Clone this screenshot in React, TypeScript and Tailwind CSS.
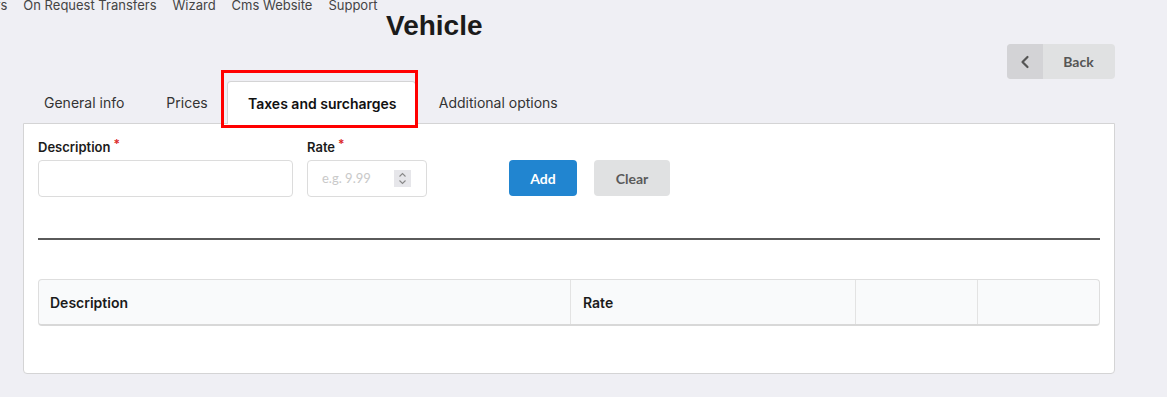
import React from "react";

const inter = { fontFamily: "Inter, 'Noto Sans', sans-serif" };

export default function App() {
  return (
    <div className="min-h-[397px] w-[1167px] bg-[#efeff4] text-[#222] [font-family:Inter,'Noto_Sans',sans-serif]">
      {/* top nav (cut off) */}
      <div className="flex h-[10px] items-center gap-[16px] overflow-visible whitespace-nowrap text-[13px] leading-[10px] text-[#444]">
        <span className="-ml-[12px]">ers</span>
        <span>On Request Transfers</span>
        <span>Wizard</span>
        <span>Cms Website</span>
        <span>Support</span>
      </div>

      <div className="ml-[23px] w-[1092px]">
        <h1 className="h-[32px] pl-[363px] text-[28px] font-bold leading-[32px] text-[#1b1b1b] [font-family:'Liberation_Sans',Arial,sans-serif]">
          Vehicle
        </h1>

        <div className="mt-[2px] flex justify-end">
          <button className="flex h-[35px] w-[108px] overflow-hidden rounded-[4px] bg-[#e0e1e2] text-[14px] font-bold text-[#555] [font-family:Lato,sans-serif]">
            <span className="flex h-full w-[36px] items-center justify-center bg-[#d3d3d6]">
              <svg width="10" height="14" viewBox="0 0 10 14" fill="none">
                <path d="M7.5 2 L2.5 7 L7.5 12" stroke="#555" strokeWidth="2.2" strokeLinecap="round" strokeLinejoin="round" />
              </svg>
            </span>
            <span className="flex flex-1 items-center justify-center pr-[1px]">Back</span>
          </button>
        </div>

        {/* tabs */}
        <div className="relative z-10 mt-[2px] flex h-[43px] items-stretch text-[14px] text-[#333]">
          <div className="flex items-center pl-[21px] pr-[20px]">General info</div>
          <div className="flex items-center pl-[22px] pr-[19px]">Prices</div>
          <div className="relative flex w-[189px] items-center justify-center rounded-t-[4px] border border-b-0 border-[#d4d4d5] bg-white font-semibold text-[#111]">
            <span className="pl-[2px]">Taxes and surcharges</span>
            <div className="pointer-events-none absolute -left-[7px] -right-[3px] -top-[12px] -bottom-[4px] border-[3px] border-[#ff0000]" />
          </div>
          <div className="flex items-center pl-[23px] pr-[21px]">Additional options</div>
        </div>

        {/* panel */}
        <div className="-mt-px h-[251px] w-[1092px] rounded-b-[4px] border border-[#d4d4d5] bg-white px-[14px] pt-[14px]">
          <div className="flex items-start">
            <div className="w-[255px]">
              <label className="flex h-[20px] items-center text-[13px] font-semibold text-[#1b1b1b]">
                Description<span className="ml-[3px] -mt-[8px] text-[12px] text-[#db2828]">*</span>
              </label>
              <div className="mt-[2px] h-[37px] rounded-[4px] border border-[#dcdcdc] bg-white" />
            </div>
            <div className="ml-[14px] w-[120px]">
              <label className="flex h-[20px] items-center text-[13px] font-semibold text-[#1b1b1b]">
                Rate<span className="ml-[3px] -mt-[8px] text-[12px] text-[#db2828]">*</span>
              </label>
              <div className="mt-[2px] flex h-[37px] items-center rounded-[4px] border border-[#dcdcdc] bg-white pl-[14px] pr-[15px]">
                <span className="flex-1 text-[13px] text-[#c9c9c9] [font-family:Lato,sans-serif]">e.g. 9.99</span>
                <span className="flex h-[17px] w-[17px] flex-col items-center justify-center bg-[#e6e6ea]">
                  <svg width="9" height="13" viewBox="0 0 9 13" fill="none">
                    <path d="M1.5 4.5 L4.5 1.5 L7.5 4.5" stroke="#888" strokeWidth="1.1" />
                    <path d="M1.5 8.5 L4.5 11.5 L7.5 8.5" stroke="#888" strokeWidth="1.1" />
                  </svg>
                </span>
              </div>
            </div>
            <button className="ml-[82px] mt-[22px] h-[36px] w-[68px] rounded-[4px] bg-[#2185d0] text-[14px] font-bold text-white [font-family:Lato,sans-serif]">
              Add
            </button>
            <button className="ml-[17px] mt-[22px] h-[36px] w-[76px] rounded-[4px] bg-[#e0e1e2] text-[14px] font-bold text-[#5a5a5a] [font-family:Lato,sans-serif]">
              Clear
            </button>
          </div>

          <div className="mt-[41px] h-[2px] w-[1062px] bg-[#5a5a5a]" />

          <div
            className="mt-[39px] flex h-[47px] w-[1062px] overflow-hidden rounded-[4px] border border-[#dedede] border-b-[2px] border-b-[#d8d8d8] bg-[#f9fafb] text-[14px] font-semibold text-[#1b1b1b]"
            style={inter}
          >
            <div className="flex w-[532px] items-center border-r border-[#e3e3e3] pl-[11px]">Description</div>
            <div className="flex w-[285px] items-center border-r border-[#e3e3e3] pl-[12px]">Rate</div>
            <div className="w-[122px] border-r border-[#e3e3e3]" />
            <div className="flex-1" />
          </div>
        </div>
      </div>
    </div>
  );
}
